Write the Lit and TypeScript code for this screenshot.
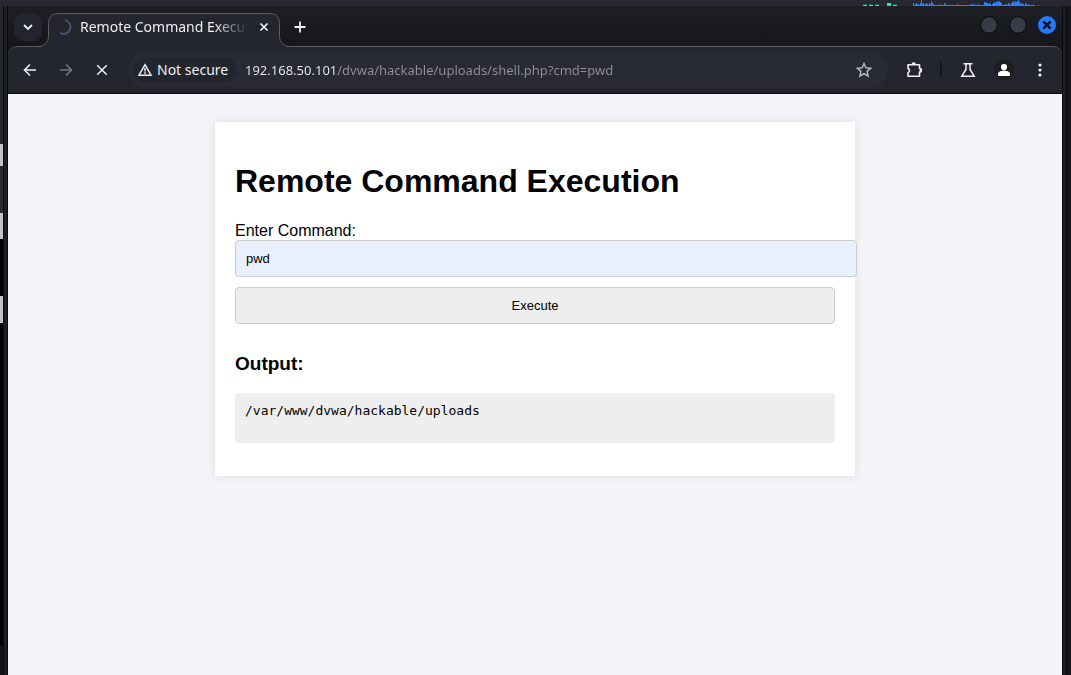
import { LitElement, html, css, svg } from "lit";
import { customElement, state } from "lit/decorators.js";

const meterBars = [
  3, 1, 2, 3, 2, 2, 1, 3, 8, 2, 3, 1, 2, 3, 2, 1, 3, 2, 5, 3, 2, 1, 1, 1, 1, 1, 2, 1, 1, 1, 1,
  3, 2, 1, 1, 1, 1, 1, 1, 1, 1, 1, 1, 1, 2, 1, 1, 1, 1, 1, 1, 1, 1, 1, 1, 1, 1, 1, 2, 2, 1, 2,
  1, 1, 1, 2, 1, 1, 1, 1, 1, 4, 3, 4, 3, 2, 3, 2, 1, 2, 3, 4, 3, 4, 5, 4, 5, 4, 3, 1, 1, 1, 2,
  2, 1, 3, 2, 1, 3, 4, 5, 3, 5, 4, 5, 6, 4, 3, 2, 3, 2, 1, 3, 2, 1, 2, 1, 1, 1, 1, 1, 1, 0, 0, 0, 1,
];

@customElement("desktop-panel")
export class DesktopPanel extends LitElement {
  static styles = css`
    :host { display: flex; justify-content: flex-end; height: 6px; padding-right: 32px;
      background: #262731; overflow: hidden; }
    svg { display: block; flex: none; }
  `;
  render() {
    return html`<svg width="177" height="6" viewBox="0 0 177 6" shape-rendering="crispEdges" aria-hidden="true">
      <g fill="#13685f"><path d="M1 4h4v1H1zM7 4h4v1H7zM13 4h4v1h-4zM31 4h4v1h-4z"/></g>
      <g fill="#12efd2"><path d="M1 5h4v1H1zM7 5h4v1H7zM13 5h4v1h-4zM25 3h4v3h-4zM31 5h4v1h-4z"/></g>
      <g fill="#277fff">${meterBars.map((h, i) => svg`<rect x=${51 + i} y=${6 - h} width="1" height=${h}/>`)}</g>
    </svg>`;
  }
}

@customElement("browser-tabs")
export class BrowserTabs extends LitElement {
  static styles = css`
    :host { display: flex; justify-content: space-between; height: 40px; box-sizing: border-box;
      background: linear-gradient(#1d1f25, #15171b); font-family: "Noto Sans", sans-serif; }
    button { border: 0; padding: 0; margin: 0; background: none; color: #eef0f1;
      display: grid; place-items: center; flex: none; }
    svg { display: block; }
    .group { display: flex; align-items: flex-start; padding: 7px 0 0 6px; }
    .search { width: 28px; height: 28px; border-radius: 9px; background: #22252e; }
    .tab { position: relative; display: flex; align-items: center; width: 232px; height: 28px;
      margin-left: 6px; padding: 0 8px; box-sizing: border-box; }
    .shape { position: absolute; left: -10px; top: 0; }
    .spinner { position: relative; flex: none; }
    .title { position: relative; flex: 1; margin-left: 8px; overflow: hidden; white-space: nowrap;
      font-size: 14px; line-height: 20px; color: #eceef0;
      mask-image: linear-gradient(90deg, #000 80%, transparent); }
    .close { position: relative; width: 16px; height: 16px; margin-left: 8px; }
    .new { width: 28px; height: 28px; margin-left: 6px; }
    .controls { display: flex; gap: 9px; padding: 9px 5px 0 0; }
    .round { width: 20px; height: 20px; }
  `;
  render() {
    return html`
      <div class="group">
        <button class="search" aria-label="Search tabs">
          <svg width="12" height="12" viewBox="0 0 12 12" fill="none" stroke="currentColor" stroke-width="1.800"><path d="M2 4l4 4 4-4"/></svg>
        </button>
        <div class="tab">
          <svg class="shape" width="252" height="34" viewBox="0 0 252 34" aria-hidden="true">
            <path d="M0 34V33.500C6 33.500 10.500 29 10.500 23.500V10.500Q10.500 .5 20.500 .5H231.500Q241.500 .5 241.500 10.500V23.500C241.500 29 246 33.500 252 33.500V34Z" fill="#23262e"/>
            <path d="M0 33.500C6 33.500 10.500 29 10.500 23.500V10.500Q10.500 .5 20.500 .5H231.500Q241.500 .5 241.500 10.500V23.500C241.500 29 246 33.500 252 33.500" fill="none" stroke="#5b5d62"/>
          </svg>
          <svg class="spinner" width="16" height="16" viewBox="0 0 16 16" fill="none" stroke="#48536d" stroke-width="2"><path d="M9 1.100A7 7 0 1 1 4 14"/></svg>
          <span class="title">Remote Command Execution</span>
          <button class="close" aria-label="Close tab">
            <svg width="12" height="12" viewBox="0 0 12 12" stroke="currentColor" stroke-width="1.700"><path d="M2.500 2.500l7 7M9.500 2.500l-7 7"/></svg>
          </button>
        </div>
        <button class="new" aria-label="New tab">
          <svg width="12" height="12" viewBox="0 0 12 12" stroke="currentColor" stroke-width="1.800"><path d="M6 .5v11M.5 6h11"/></svg>
        </button>
      </div>
      <div class="controls">
        <button class="round" aria-label="Minimize"><svg width="20" height="20"><circle cx="10" cy="10" r="8.300" fill="#373c49" stroke="#08090c"/></svg></button>
        <button class="round" aria-label="Maximize"><svg width="20" height="20"><circle cx="10" cy="10" r="8.300" fill="#373c49" stroke="#08090c"/></svg></button>
        <button class="round" aria-label="Close"><svg width="20" height="20"><circle cx="10" cy="10" r="9" fill="#2777ff"/><path d="M6.300 6.300l7.400 7.400M13.700 6.300l-7.400 7.400" stroke="#10131b" stroke-width="2.500"/></svg></button>
      </div>`;
  }
}

@customElement("browser-toolbar")
export class BrowserToolbar extends LitElement {
  static styles = css`
    :host { display: block; background: #15171b; font-family: "Noto Sans", sans-serif; }
    .bar { display: flex; align-items: center; height: 48px; box-sizing: border-box; padding: 0 8px;
      background: #23262e; border-top: 1px solid #5b5d62; border-bottom: 1px solid #08090b;
      border-radius: 9px 9px 0 0; }
    .wrap { position: relative; }
    .join { position: absolute; left: 34px; top: 0; width: 244px; height: 1px; background: #23262e; }
    button { border: 0; padding: 0; margin: 0; background: none; color: #eef0f1; font: inherit;
      display: grid; place-items: center; width: 28px; height: 28px; flex: none; }
    svg { display: block; }
    .nav { display: flex; gap: 8px; }
    .off { color: #74767b; }
    .omnibox { display: flex; align-items: center; flex: 1; min-width: 0; height: 34px; margin-left: 12px;
      padding: 0 10px 0 5px; box-sizing: border-box; border-radius: 17px; background: #282a35; }
    .chip { display: flex; align-items: center; gap: 4px; width: 104px; height: 24px; padding: 0 4px;
      box-sizing: border-box; border-radius: 12px; background: #22252d; font-size: 14px; line-height: 20px;
      white-space: nowrap; }
    .url { flex: 1; min-width: 0; height: 24px; margin: 0 0 0 8px; padding: 0; border: 0; outline: 0;
      font-family: "Noto Sans", sans-serif; font-size: 13px; color: #909196;
      background: linear-gradient(90deg, #eceef0 93px, #909196 93px); background-clip: text;
      -webkit-background-clip: text; -webkit-text-fill-color: transparent; }
    .star { color: #c3c5c8; }
    .tools { display: flex; align-items: center; margin-left: 12px; }
    .rule { width: 2px; height: 16px; margin: 0 12px; background: #14161a; }
    .more { display: flex; gap: 8px; }
  `;
  render() {
    return html`<div class="wrap"><div class="bar">
      <div class="nav">
        <button aria-label="Back"><svg width="14" height="14" viewBox="0 0 14 14" fill="none" stroke="currentColor" stroke-width="1.600"><path d="M13 7H2M7 1.500L1.500 7 7 12.500"/></svg></button>
        <button class="off" aria-label="Forward"><svg width="14" height="14" viewBox="0 0 14 14" fill="none" stroke="currentColor" stroke-width="1.600"><path d="M1 7h11M7 1.500L12.500 7 7 12.500"/></svg></button>
        <button aria-label="Stop"><svg width="12" height="12" viewBox="0 0 12 12" stroke="currentColor" stroke-width="1.500"><path d="M1.200 1.200l9.600 9.600M10.800 1.200L1.200 10.800"/></svg></button>
      </div>
      <div class="omnibox">
        <button class="chip"><svg width="16" height="16" viewBox="0 0 16 16" fill="none" stroke="currentColor" stroke-width="1.500"><path d="M8 2.700L14 13.200H2Z"/><path d="M8 6v3.400M8 10.300v1.600"/></svg><span>Not secure</span></button>
        <input class="url" aria-label="Address" spellcheck="false" .value=${"192.168.50.101/dvwa/hackable/uploads/shell.php?cmd=pwd"}>
        <button class="star" aria-label="Bookmark this page"><svg width="20" height="20" viewBox="0 0 24 24" fill="currentColor"><path d="M22 9.240l-7.190-.620L12 2 9.190 8.630 2 9.240l5.460 4.730L5.820 21 12 17.270 18.180 21l-1.630-7.030L22 9.240zM12 15.400l-3.760 2.270 1-4.280-3.320-2.880 4.380-.380L12 6.100l1.710 4.040 4.380.380-3.320 2.880 1 4.280L12 15.400z"/></svg></button>
      </div>
      <div class="tools">
        <button aria-label="Extensions"><svg width="20" height="18" viewBox="0 0 20 18"><path d="M4 3.800h11.500v3.600a1.800 1.800 0 0 1 0 3.600v4.200H4v-3.500a2.300 2.300 0 0 0 0-4.300Z" fill="none" stroke="currentColor" stroke-width="1.600" stroke-linejoin="round"/><path d="M7.500 3.500a2.200 2.200 0 0 1 4.400 0ZM15.700 7a2.200 2.200 0 0 1 0 4.400Z" fill="currentColor"/></svg></button>
        <span class="rule"></span>
        <div class="more">
          <button aria-label="Labs"><svg width="16" height="16" viewBox="0 0 16 16" fill="none" stroke="currentColor" stroke-width="1.500"><path d="M3.500 1.800h9M6 2v5.200L1.800 14.200h12.400L10 7.200V2"/></svg></button>
          <button aria-label="Profile"><svg width="20" height="20" viewBox="0 0 20 20"><circle cx="10" cy="10" r="10" fill="#1c1e20"/><circle cx="10" cy="7" r="3.100" fill="#fff"/><path d="M4 16v-2.200c0-2 4-3.200 6-3.200s6 1.200 6 3.200V16Z" fill="#fff"/></svg></button>
          <button aria-label="Menu"><svg width="4" height="16" viewBox="0 0 4 16" fill="currentColor"><circle cx="2" cy="3" r="1.600"/><circle cx="2" cy="8" r="1.600"/><circle cx="2" cy="13" r="1.600"/></svg></button>
        </div>
      </div>
    </div><div class="join"></div></div>`;
  }
}

@customElement("command-page")
export class CommandPage extends LitElement {
  static styles = css`
    :host { display: block; flex: 1; min-height: 0; padding: 28px; box-sizing: border-box; background: #f4f4f9;
      color: #000; font-family: "Liberation Sans", Arial, sans-serif; font-size: 16px; line-height: 18px; }
    .card { max-width: 640px; box-sizing: border-box; margin: 0 auto; padding: 20px; background: #fff;
      box-shadow: 0 0 10px rgba(0, 0, 0, 0.1); display: flow-root; }
    .heading { margin: 21px 0 22px; font-size: 32px; line-height: 37px; }
    .form { display: flow-root; }
    .label { display: block; }
    .command, .run { display: block; width: 100%; height: 37px; margin: 0 0 10px; padding: 10px;
      border: 1px solid #ccc; border-radius: 4px; font-family: inherit; font-size: 13px; line-height: 15px; color: #000; }
    .command { box-sizing: content-box; height: 15px; background: #e8f0fe; outline: 0; }
    .run { box-sizing: border-box; background: #eee; }
    .subheading { margin: 19px 0; font-size: 19px; line-height: 21px; }
    .output { min-height: 30px; margin: 0 0 13px; padding: 10px; border-radius: 4px; background: #eee;
      font-family: "DejaVu Sans Mono", monospace; font-size: 13px; line-height: 15px; white-space: pre-wrap; }
  `;
  @state() private output = "/var/www/dvwa/hackable/uploads\n";
  render() {
    return html`<main class="card">
      <h1 class="heading">Remote Command Execution</h1>
      <form class="form" @submit=${(e: Event) => e.preventDefault()}>
        <label class="label" for="cmd">Enter Command:</label>
        <input class="command" id="cmd" type="text" name="cmd" value="pwd">
        <button class="run" type="submit">Execute</button>
      </form>
      <h3 class="subheading">Output:</h3>
      <pre class="output">${this.output}</pre>
    </main>`;
  }
}

@customElement("app-root")
export class AppRoot extends LitElement {
  static styles = css`
    :host { display: flex; flex-direction: column; height: 100vh; overflow: hidden; background: #000; }
    .desk { display: grid; grid-template-columns: 3px 5px minmax(0, 1fr) 4px 5px; flex: 1; min-height: 0; }
    .wall { background: linear-gradient(#262729 0 138px, #c4c4c4 138px 160px, #2b2b2d 160px 207px,
      #c4c4c4 207px 233px, #000 233px 290px, #c4c4c4 290px 317px, #000 317px 640px, #151515 640px); }
    .left { background: linear-gradient(90deg, #0a0c0f 1px, #1b2028 1px 4px, #08090c 4px); }
    .right { background: linear-gradient(90deg, #08090c 1px, #1b1e24 1px); }
    .edge { background: linear-gradient(90deg, #08090c 1px, #14171c 1px); }
    .window { display: flex; flex-direction: column; min-width: 0; min-height: 0; }
  `;
  render() {
    return html`<desktop-panel></desktop-panel>
      <div class="desk">
        <div class="wall"></div><div class="left"></div>
        <div class="window">
          <browser-tabs></browser-tabs>
          <browser-toolbar></browser-toolbar>
          <command-page></command-page>
        </div>
        <div class="right"></div><div class="edge"></div>
      </div>`;
  }
}
